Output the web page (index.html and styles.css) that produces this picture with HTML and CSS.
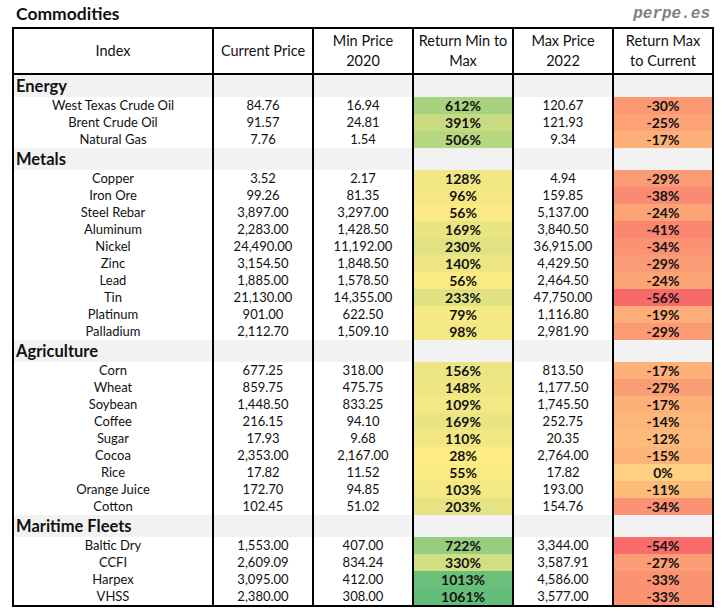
FILE: index.html
```html
<!DOCTYPE html>
<html>
<head>
<meta charset="utf-8">
<link rel="stylesheet" href="styles.css">
</head>
<body>
<div class="sheet">
  <div class="titlebar">
    <span class="title">Commodities</span>
    <span class="brand">perpe.es</span>
  </div>
  <table class="grid">
    <colgroup>
      <col class="c-name"><col class="c-num"><col class="c-num"><col class="c-num"><col class="c-num"><col class="c-num">
    </colgroup>
    <thead>
      <tr>
        <th>Index</th>
        <th>Current Price</th>
        <th>Min Price<br>2020</th>
        <th>Return Min to<br>Max</th>
        <th>Max Price<br>2022</th>
        <th>Return Max<br>to Current</th>
      </tr>
    </thead>
    <tbody>
      <tr class="sec"><td class="label">Energy</td><td></td><td></td><td></td><td></td><td></td></tr>
      <tr><td>West Texas Crude Oil</td><td>84.76</td><td>16.94</td><td class="pct" style="background:#a7d27f">612%</td><td>120.67</td><td class="pct" style="background:#fb9974">-30%</td></tr>
      <tr><td>Brent Crude Oil</td><td>91.57</td><td>24.81</td><td class="pct" style="background:#c8db81">391%</td><td>121.93</td><td class="pct" style="background:#fca276">-25%</td></tr>
      <tr><td>Natural Gas</td><td>7.76</td><td>1.54</td><td class="pct" style="background:#b7d680">506%</td><td>9.34</td><td class="pct" style="background:#fdb179">-17%</td></tr>

      <tr class="sec"><td class="label">Metals</td><td></td><td></td><td></td><td></td><td></td></tr>
      <tr><td>Copper</td><td>3.52</td><td>2.17</td><td class="pct" style="background:#f0e783">128%</td><td>4.94</td><td class="pct" style="background:#fb9b75">-29%</td></tr>
      <tr><td>Iron Ore</td><td>99.26</td><td>81.35</td><td class="pct" style="background:#f5e883">96%</td><td>159.85</td><td class="pct" style="background:#fa8a71">-38%</td></tr>
      <tr><td>Steel Rebar</td><td>3,897.00</td><td>3,297.00</td><td class="pct" style="background:#fbea84">56%</td><td>5,137.00</td><td class="pct" style="background:#fca476">-24%</td></tr>
      <tr><td>Aluminum</td><td>2,283.00</td><td>1,428.50</td><td class="pct" style="background:#eae583">169%</td><td>3,840.50</td><td class="pct" style="background:#fa8570">-41%</td></tr>
      <tr><td>Nickel</td><td>24,490.00</td><td>11,192.00</td><td class="pct" style="background:#e1e282">230%</td><td>36,915.00</td><td class="pct" style="background:#fb9273">-34%</td></tr>
      <tr><td>Zinc</td><td>3,154.50</td><td>1,848.50</td><td class="pct" style="background:#eee683">140%</td><td>4,429.50</td><td class="pct" style="background:#fb9b75">-29%</td></tr>
      <tr><td>Lead</td><td>1,885.00</td><td>1,578.50</td><td class="pct" style="background:#fbea84">56%</td><td>2,464.50</td><td class="pct" style="background:#fca476">-24%</td></tr>
      <tr><td>Tin</td><td>21,130.00</td><td>14,355.00</td><td class="pct" style="background:#e0e282">233%</td><td>47,750.00</td><td class="pct" style="background:#f8696b">-56%</td></tr>
      <tr><td>Platinum</td><td>901.00</td><td>622.50</td><td class="pct" style="background:#f7e984">79%</td><td>1,116.80</td><td class="pct" style="background:#fdad78">-19%</td></tr>
      <tr><td>Palladium</td><td>2,112.70</td><td>1,509.10</td><td class="pct" style="background:#f4e883">98%</td><td>2,981.90</td><td class="pct" style="background:#fb9b75">-29%</td></tr>

      <tr class="sec"><td class="label">Agriculture</td><td></td><td></td><td></td><td></td><td></td></tr>
      <tr><td>Corn</td><td>677.25</td><td>318.00</td><td class="pct" style="background:#ece583">156%</td><td>813.50</td><td class="pct" style="background:#fdb179">-17%</td></tr>
      <tr><td>Wheat</td><td>859.75</td><td>475.75</td><td class="pct" style="background:#ede683">148%</td><td>1,177.50</td><td class="pct" style="background:#fc9e75">-27%</td></tr>
      <tr><td>Soybean</td><td>1,448.50</td><td>833.25</td><td class="pct" style="background:#f3e883">109%</td><td>1,745.50</td><td class="pct" style="background:#fdb179">-17%</td></tr>
      <tr><td>Coffee</td><td>216.15</td><td>94.10</td><td class="pct" style="background:#eae583">169%</td><td>252.75</td><td class="pct" style="background:#fdb67a">-14%</td></tr>
      <tr><td>Sugar</td><td>17.93</td><td>9.68</td><td class="pct" style="background:#f3e783">110%</td><td>20.35</td><td class="pct" style="background:#feba7b">-12%</td></tr>
      <tr><td>Cocoa</td><td>2,353.00</td><td>2,167.00</td><td class="pct" style="background:#ffeb84">28%</td><td>2,764.00</td><td class="pct" style="background:#fdb47a">-15%</td></tr>
      <tr><td>Rice</td><td>17.82</td><td>11.52</td><td class="pct" style="background:#fbea84">55%</td><td>17.82</td><td class="pct" style="background:#ffd07f">0%</td></tr>
      <tr><td>Orange Juice</td><td>172.70</td><td>94.85</td><td class="pct" style="background:#f4e883">103%</td><td>193.00</td><td class="pct" style="background:#febc7b">-11%</td></tr>
      <tr><td>Cotton</td><td>102.45</td><td>51.02</td><td class="pct" style="background:#e5e383">203%</td><td>154.76</td><td class="pct" style="background:#fb9273">-34%</td></tr>

      <tr class="sec"><td class="label">Maritime Fleets</td><td></td><td></td><td></td><td></td><td></td></tr>
      <tr><td>Baltic Dry</td><td>1,553.00</td><td>407.00</td><td class="pct" style="background:#96cd7e">722%</td><td>3,344.00</td><td class="pct" style="background:#f86d6c">-54%</td></tr>
      <tr><td>CCFI</td><td>2,609.09</td><td>834.24</td><td class="pct" style="background:#d1de81">330%</td><td>3,587.91</td><td class="pct" style="background:#fc9e75">-27%</td></tr>
      <tr><td>Harpex</td><td>3,095.00</td><td>412.00</td><td class="pct" style="background:#6ac07b">1013%</td><td>4,586.00</td><td class="pct" style="background:#fb9373">-33%</td></tr>
      <tr><td>VHSS</td><td>2,380.00</td><td>308.00</td><td class="pct" style="background:#63be7b">1061%</td><td>3,577.00</td><td class="pct" style="background:#fb9373">-33%</td></tr>
    </tbody>
  </table>
</div>
</body>
</html>
```
FILE: styles.css
```css
html, body {
  margin: 0;
  padding: 0;
  background: #ffffff;
}
body {
  font-family: Lato, "Open Sans", "Liberation Sans", sans-serif;
  color: #111111;
}
.sheet {
  width: 702px;
  margin-left: 12px;
}
.titlebar {
  height: 27px;
  display: flex;
  justify-content: space-between;
  align-items: center;
  padding: 0 4px;
  box-sizing: border-box;
}
.title {
  font-size: 17.5px;
  font-weight: 700;
  color: #111111;
  margin-top: -1px;
}
.brand {
  font-family: "Liberation Mono", "DejaVu Sans Mono", monospace;
  font-size: 16px;
  font-weight: 700;
  font-style: italic;
  color: #7f7f7f;
  margin-top: 1px;
}
.grid {
  border-collapse: collapse;
  table-layout: fixed;
  width: 702px;
  border: 2px solid #000000;
}
.c-name { width: 200px; }
.c-num { width: 100px; }
.grid th,
.grid td {
  padding: 0;
  border-left: 2px solid #000000;
  border-right: 2px solid #000000;
  text-align: center;
  white-space: nowrap;
}
.grid th {
  font-weight: 400;
  font-size: 14.5px;
  line-height: 20px;
  height: 44px;
  border-bottom: 2px solid #000000;
  color: #111111;
}
.grid tbody td {
  font-size: 13px;
  height: 17px;
  line-height: 17px;
}
.grid tbody .pct {
  font-weight: 700;
  font-size: 14px;
}
.grid tr.sec td {
  background: #f2f2f2;
  height: 22px;
  line-height: 22px;
}
.grid tr.sec td.label {
  text-align: left;
  font-weight: 700;
  font-size: 16.5px;
  padding-left: 2px;
}
```
